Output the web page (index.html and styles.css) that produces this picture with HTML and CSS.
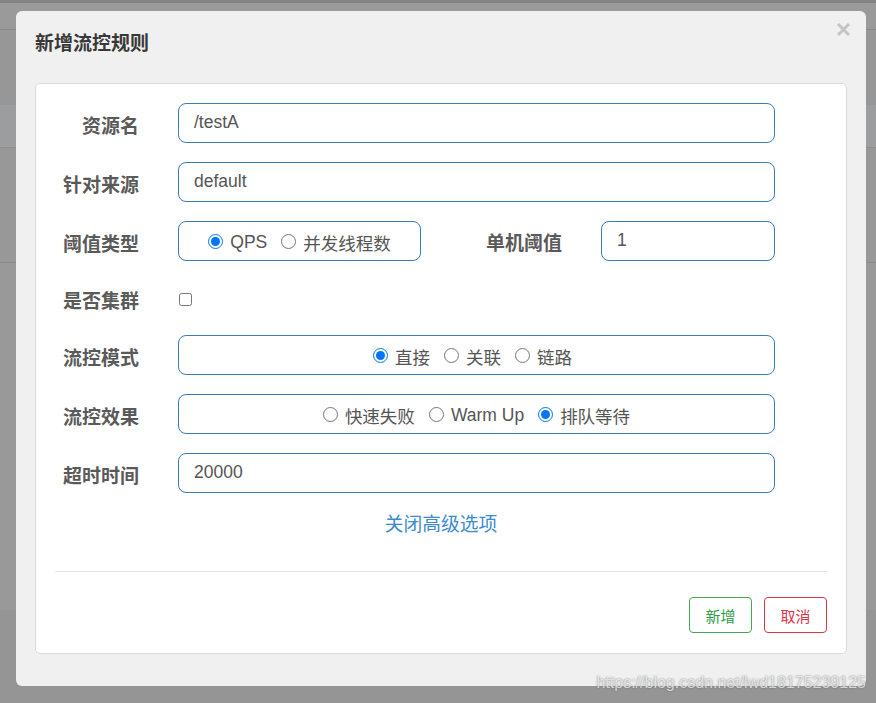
FILE: index.html
```html
<!DOCTYPE html>
<html lang="zh-CN">
<head>
<meta charset="utf-8">
<title>新增流控规则</title>
<link rel="stylesheet" href="styles.css">
</head>
<body>
<div class="backdrop">
  <div class="band b1"></div>
  <div class="band b2"></div>
  <div class="band line"></div>
  <div class="band b3"></div>
  <div class="band b4"></div>
  <div class="band line2"></div>
  <div class="band b5"></div>
  <div class="band line"></div>
  <div class="band b6"></div>
  <div class="band b7"></div>
</div>

<div class="modal">
  <svg class="close" width="15" height="15" viewBox="0 0 15 15"><path d="M2 2 L13 13 M13 2 L2 13" stroke="#c4c4c4" stroke-width="3" stroke-linecap="butt"/></svg>
  <h4 class="title">新增流控规则</h4>
  <div class="panel">
    <div class="form-grid">
      <div class="label">资源名</div>
      <div class="field"><div class="input">/testA</div></div>

      <div class="label">针对来源</div>
      <div class="field"><div class="input">default</div></div>

      <div class="label">阈值类型</div>
      <div class="field split">
        <div class="radio-box small">
          <label class="opt"><input type="radio" name="grade" checked><span>QPS</span></label>
          <label class="opt"><input type="radio" name="grade"><span>并发线程数</span></label>
        </div>
        <div class="label inline-label">单机阈值</div>
        <div class="input short">1</div>
      </div>

      <div class="label">是否集群</div>
      <div class="field"><input class="check" type="checkbox"></div>

      <div class="label">流控模式</div>
      <div class="field">
        <div class="radio-box shift">
          <label class="opt"><input type="radio" name="mode" checked><span>直接</span></label>
          <label class="opt"><input type="radio" name="mode"><span>关联</span></label>
          <label class="opt"><input type="radio" name="mode"><span>链路</span></label>
        </div>
      </div>

      <div class="label">流控效果</div>
      <div class="field">
        <div class="radio-box">
          <label class="opt"><input type="radio" name="effect"><span>快速失败</span></label>
          <label class="opt"><input type="radio" name="effect"><span>Warm Up</span></label>
          <label class="opt"><input type="radio" name="effect" checked><span>排队等待</span></label>
        </div>
      </div>

      <div class="label">超时时间</div>
      <div class="field"><div class="input">20000</div></div>
    </div>

    <div class="link-row"><a class="link">关闭高级选项</a></div>
    <div class="divider"></div>
    <div class="actions">
      <button class="btn btn-add">新增</button>
      <button class="btn btn-cancel">取消</button>
    </div>
  </div>
</div>

<div class="watermark">https://blog.csdn.net/lwd18175239125</div>
</body>
</html>
```

FILE: styles.css
```css
html, body {
  margin: 0;
  padding: 0;
}
body {
  width: 876px;
  height: 703px;
  background: #959595;
  overflow: hidden;
  position: relative;
  font-family: "Liberation Sans", "Noto Sans CJK SC", sans-serif;
}

.backdrop {
  display: flex;
  flex-direction: column;
  height: 703px;
}
.band { width: 100%; }
.b1 { height: 3px; background: #838383; }
.b2 { height: 26px; background: #9a9a9a; }
.line { height: 1px; background: #8a8a8a; }
.line2 { height: 1px; background: #8e8e8e; }
.b3 { height: 75px; background: #979797; }
.b4 { height: 42px; background: #9c9d9e; }
.b5 { height: 114px; background: #989898; }
.b6 { height: 347px; background: #999999; }
.b7 { flex: 1; background: #959595; }

.modal {
  position: absolute;
  left: 16px;
  top: 11px;
  width: 850px;
  height: 675px;
  box-sizing: border-box;
  background: #f0f0f0;
  border-radius: 6px;
  padding: 20px 19px 0 19px;
}
.close {
  position: absolute;
  top: 11px;
  right: 15px;
}
.title {
  margin: 0 0 26px 0;
  font-size: 19px;
  line-height: 26px;
  font-weight: bold;
  color: #383838;
}

.panel {
  background: #fff;
  border: 1px solid #dcdcdc;
  border-radius: 5px;
  padding: 19px 19px 20px 19px;
}

.form-grid {
  display: grid;
  grid-template-columns: 85px 597px;
  grid-template-rows: 40px 40px 40px 36px 40px 40px 40px;
  column-gap: 38px;
  row-gap: 19px;
}
.label {
  font-size: 19px;
  font-weight: bold;
  color: #5a5a5a;
  text-align: right;
  display: flex;
  align-items: center;
  justify-content: flex-end;
  padding-top: 3px;
  padding-right: 1px;
  box-sizing: border-box;
  white-space: nowrap;
}
.field {
  display: flex;
  align-items: center;
}

.input {
  box-sizing: border-box;
  width: 100%;
  height: 40px;
  border: 1px solid #3a7cc0;
  border-radius: 8px;
  padding: 0 15px;
  font-size: 17.5px;
  color: #555;
  display: flex;
  align-items: center;
  padding-bottom: 2px;
}
.split .radio-box.small { width: 243px; flex: none; }
.inline-label { width: 76px; margin-left: 66px; flex: none; padding-top: 0; }
.input.short { width: 174px; margin-left: 38px; flex: none; }

.radio-box {
  box-sizing: border-box;
  width: 100%;
  height: 40px;
  border: 1px solid #3a7cc0;
  border-radius: 8px;
  display: flex;
  align-items: center;
  justify-content: center;
  gap: 14px;
  font-size: 17.5px;
  color: #555;
}
.radio-box.shift { padding-right: 8px; }
.opt {
  display: flex;
  align-items: center;
  gap: 7px;
}
.opt span { padding-top: 2px; }
.opt input {
  margin: 0;
  width: 15px;
  height: 15px;
  accent-color: #0075ff;
}
.check {
  margin: 3px 0 0 1px;
  width: 13px;
  height: 13px;
}

.link-row {
  margin-top: 20px;
  text-align: center;
  line-height: 24px;
}
.link {
  font-size: 18.75px;
  color: #3d8bd0;
  cursor: pointer;
}
.divider {
  margin-top: 33px;
  height: 1px;
  background: #e5e5e5;
}
.actions {
  margin-top: 25px;
  display: flex;
  justify-content: flex-end;
  gap: 12px;
}
.btn {
  width: 63px;
  height: 36px;
  box-sizing: border-box;
  background: #fff;
  border-radius: 4px;
  font-family: "Noto Sans CJK SC", sans-serif;
  font-size: 15px;
  padding: 0;
  cursor: pointer;
}
.btn-add { border: 1px solid #3fa94f; color: #2f9e44; }
.btn-cancel { border: 1px solid #dc3545; color: #dc3545; }

.watermark {
  position: absolute;
  right: 10px;
  top: 673px;
  font-size: 16px;
  line-height: 20px;
  color: rgba(255, 255, 255, 0.7);
  text-shadow: 0 0 2px rgba(90, 90, 90, 0.8);
  white-space: nowrap;
}
```
